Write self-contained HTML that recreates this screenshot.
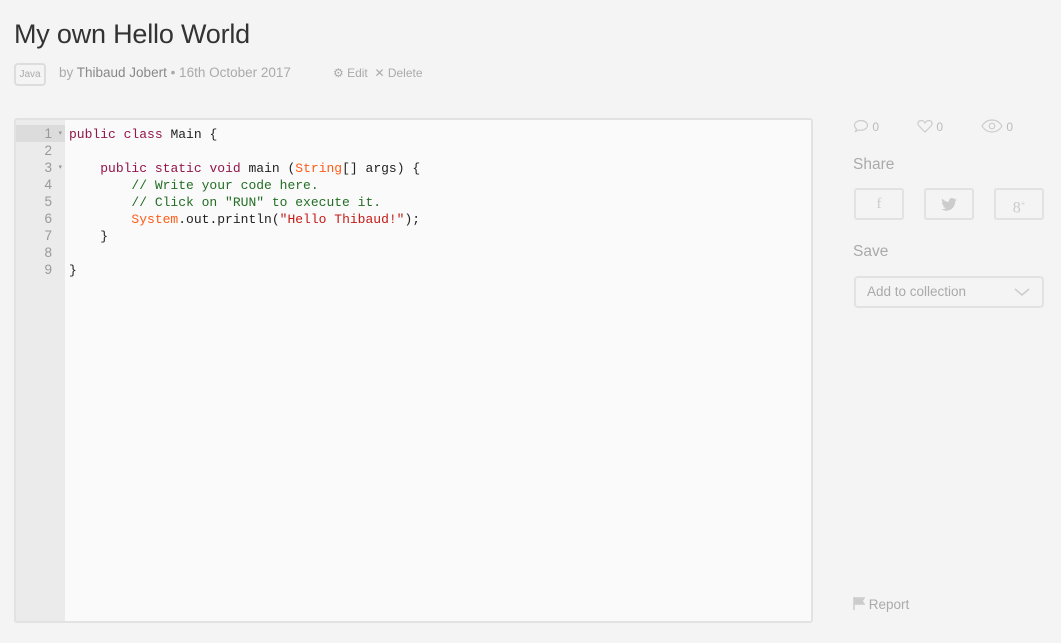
<!DOCTYPE html>
<html><head><style>
body{margin:0;background:#f4f4f4;font-family:"Liberation Sans",sans-serif;width:1061px;height:643px;overflow:hidden;position:relative}
.a{position:absolute}
h1{position:absolute;left:14px;top:19px;margin:0;font-weight:normal;font-size:27px;color:#333;letter-spacing:-0.2px}
.tag{left:14px;top:63px;width:32px;height:23px;border:2px solid #ddd;border-radius:4px;box-sizing:border-box;font-size:10px;color:#aaa;text-align:center;line-height:19px}
.meta{top:65px;font-size:13.5px;color:#aaa}
.ed{left:14px;top:118px;width:799px;height:505px;border:2px solid #e2e2e2;border-radius:3px;box-sizing:border-box;background:#fafafa;overflow:hidden}
.gut{position:absolute;left:0;top:0;width:49px;height:100%;background:#ebebeb}
.code{position:absolute;left:0;top:5px;font-family:"Liberation Mono",monospace;font-size:13px;line-height:17px;white-space:pre;color:#222}
.l{height:17px}
.ln{display:inline-block;width:49px;box-sizing:border-box;text-align:right;color:#999;padding-right:13px;margin-right:4px;font-family:"Liberation Sans",sans-serif;font-size:13.5px;position:relative}
.ar{position:absolute;right:3px;top:0;font-size:7px;color:#999}
.hl{background:#dcdcdc}
.k{color:#93154b}.s{color:#c41a16}.c{color:#236e24}.o{color:#ff5b17}
.side{font-size:12px;color:#bbb}
.btn{border:2px solid #e2e2e2;border-radius:3px;box-sizing:border-box;height:32px;width:50px;top:188px;text-align:center;line-height:28px;color:#ccc;font-size:14px}
</style></head><body>
<h1>My own Hello World</h1>
<div class="a tag">Java</div>
<div class="a meta" style="left:59px">by <span style="color:#888">Thibaud Jobert</span> • 16th October 2017</div>
<div class="a meta" style="left:333px;font-size:12px;top:66px">⚙ Edit &nbsp;✕ Delete</div>
<div class="a ed"><div class="gut"></div>
<div class="code"><div class="l"><span class="ln hl">1<span class="ar">▾</span></span><span class="k">public</span> <span class="k">class</span> Main {</div><div class="l"><span class="ln">2</span></div><div class="l"><span class="ln">3<span class="ar">▾</span></span>    <span class="k">public</span> <span class="k">static</span> <span class="k">void</span> main (<span class="o">String</span>[] args) {</div><div class="l"><span class="ln">4</span>        <span class="c">// Write your code here.</span></div><div class="l"><span class="ln">5</span>        <span class="c">// Click on "RUN" to execute it.</span></div><div class="l"><span class="ln">6</span>        <span class="o">System</span>.out.println(<span class="s">"Hello Thibaud!"</span>);</div><div class="l"><span class="ln">7</span>    }</div><div class="l"><span class="ln">8</span></div><div class="l"><span class="ln">9</span>}</div></div></div>
<div class="a side" style="left:853px;top:119px">
<svg width="16" height="14" viewBox="0 0 16 14" style="vertical-align:-2px"><path d="M8 1.5C4.4 1.5 1.5 3.7 1.5 6.4c0 1.4.8 2.6 2 3.5L2.5 12.5l3.4-1.6c.7.2 1.4.3 2.1.3 3.6 0 6.5-2.2 6.5-4.8S11.6 1.5 8 1.5z" fill="none" stroke="#ccc" stroke-width="1.2"/></svg> 0</div>
<div class="a side" style="left:917px;top:119px"><svg width="16" height="14" viewBox="0 0 16 14" style="vertical-align:-2px"><path d="M8 13L2 7C0 5 1 1.5 4.2 1.5 6 1.5 7.3 2.7 8 4c.7-1.3 2-2.5 3.8-2.5C15 1.5 16 5 14 7z" fill="none" stroke="#ccc" stroke-width="1.2"/></svg> 0</div>
<div class="a side" style="left:981px;top:119px"><svg width="22" height="14" viewBox="0 0 22 14" style="vertical-align:-2px"><path d="M1 7C4 2 8 1 11 1s7 1 10 6c-3 5-7 6-10 6S4 12 1 7z" fill="none" stroke="#ccc" stroke-width="1.2"/><circle cx="11" cy="7" r="2.8" fill="none" stroke="#ccc" stroke-width="1.2"/></svg> 0</div>
<div class="a" style="left:853px;top:156px;font-size:15.5px;color:#aaa">Share</div>
<div class="a btn" style="left:854px;font-family:'Liberation Serif',serif;font-size:15px">f</div>
<div class="a btn" style="left:924px"><svg width="16" height="13" viewBox="0 0 24 20" style="vertical-align:-2px"><path fill="#ccc" d="M24 2.4c-.9.4-1.8.7-2.8.8 1-.6 1.8-1.6 2.2-2.7-1 .6-2 1-3.1 1.2C19.3.7 18 0 16.6 0c-2.7 0-4.9 2.2-4.9 4.9 0 .4 0 .8.1 1.1C7.7 5.8 4.1 3.9 1.7.9c-.4.7-.7 1.6-.7 2.5 0 1.7.9 3.2 2.2 4.1-.8 0-1.6-.2-2.2-.6v.1c0 2.4 1.7 4.4 3.9 4.8-.4.1-.8.2-1.3.2-.3 0-.6 0-.9-.1.6 2 2.4 3.4 4.6 3.4-1.7 1.3-3.8 2.1-6.1 2.1H0c2.2 1.4 4.8 2.2 7.5 2.2 9.1 0 14-7.5 14-14v-.6c1-.7 1.8-1.6 2.5-2.5z"/></svg></div>
<div class="a btn" style="left:994px;font-family:'Liberation Serif',serif;font-size:16px">8<sup style="font-size:8px">+</sup></div>
<div class="a" style="left:853px;top:243px;font-size:15.5px;color:#aaa">Save</div>
<div class="a" style="left:854px;top:276px;width:190px;height:32px;border:2px solid #e2e2e2;border-radius:4px;box-sizing:border-box;font-size:13.5px;color:#aaa;line-height:28px;padding-left:11px">Add to collection<svg class="a" style="right:12px;top:10px" width="16" height="9" viewBox="0 0 16 9"><path d="M1 1l7 6 7-6" fill="none" stroke="#ccc" stroke-width="1.5"/></svg></div>
<div class="a" style="left:853px;top:597px;font-size:13.5px;color:#aaa"><svg width="12" height="13" viewBox="0 0 12 13" style="vertical-align:-1px"><path d="M1 0v13M1 1h10l-2 3 2 3H1" fill="#ccc" stroke="#ccc" stroke-width="1.5"/></svg> Report</div>
</body></html>
